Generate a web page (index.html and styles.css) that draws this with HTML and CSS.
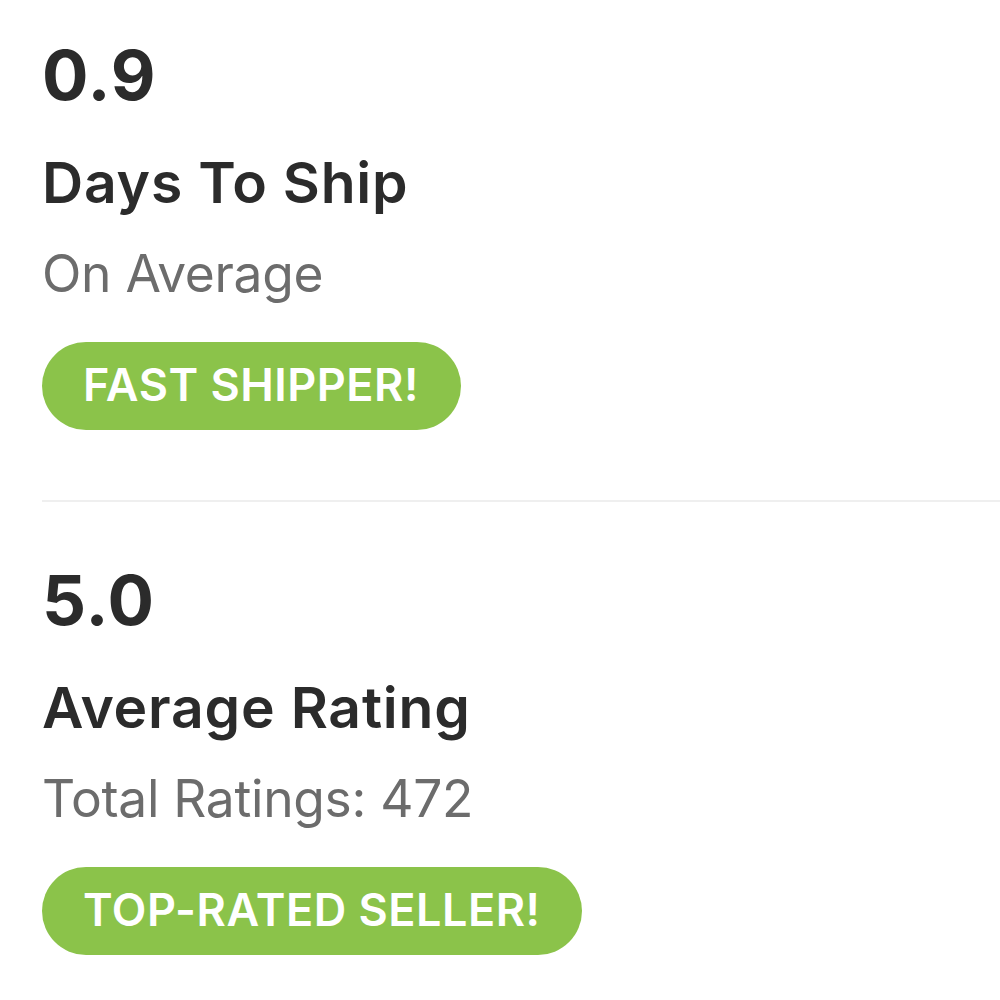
FILE: index.html
```html
<!DOCTYPE html>
<html>
<head>
<meta charset="utf-8">
<link rel="stylesheet" href="styles.css">
</head>
<body>
<div class="stats">
  <section class="stat">
    <div class="value">0.9</div>
    <div class="title">Days To Ship</div>
    <div class="sub">On Average</div>
    <div class="badge">FAST SHIPPER!</div>
  </section>
  <hr class="divider">
  <section class="stat stat-second">
    <div class="value">5.0</div>
    <div class="title">Average Rating</div>
    <div class="sub">Total Ratings: 472</div>
    <div class="badge">TOP-RATED SELLER!</div>
  </section>
</div>
</body>
</html>
```
FILE: styles.css
```css
html, body {
  margin: 0;
  padding: 0;
  background: #ffffff;
}
body {
  font-family: "Inter", "Lato", "Liberation Sans", sans-serif;
  color: #2b2b2b;
}
.stats {
  display: flex;
  flex-direction: column;
  padding-left: 42px;
  padding-top: 35px;
}
.stat {
  display: flex;
  flex-direction: column;
  align-items: flex-start;
}
.value {
  font-size: 69px;
  line-height: 80px;
  font-weight: 700;
  letter-spacing: 1px;
}
.title {
  font-size: 57px;
  line-height: 64px;
  font-weight: 600;
  letter-spacing: 0.8px;
  margin-top: 36px;
}
.sub {
  font-size: 51.5px;
  line-height: 60px;
  font-weight: 400;
  letter-spacing: -0.3px;
  color: #6c6c6c;
  margin-top: 28px;
}
.badge {
  margin-top: 39px;
  height: 88px;
  box-sizing: border-box;
  display: inline-flex;
  align-items: center;
  padding: 0 42px 4px 41px;
  border-radius: 44px;
  background: #8bc34a;
  color: #ffffff;
  font-size: 45px;
  font-weight: 600;
  letter-spacing: 0.5px;
}
.divider {
  border: 0;
  height: 2px;
  background: #efefef;
  margin: 70px 0 0 0;
}
.stat-second {
  margin-top: 58px;
}
```
